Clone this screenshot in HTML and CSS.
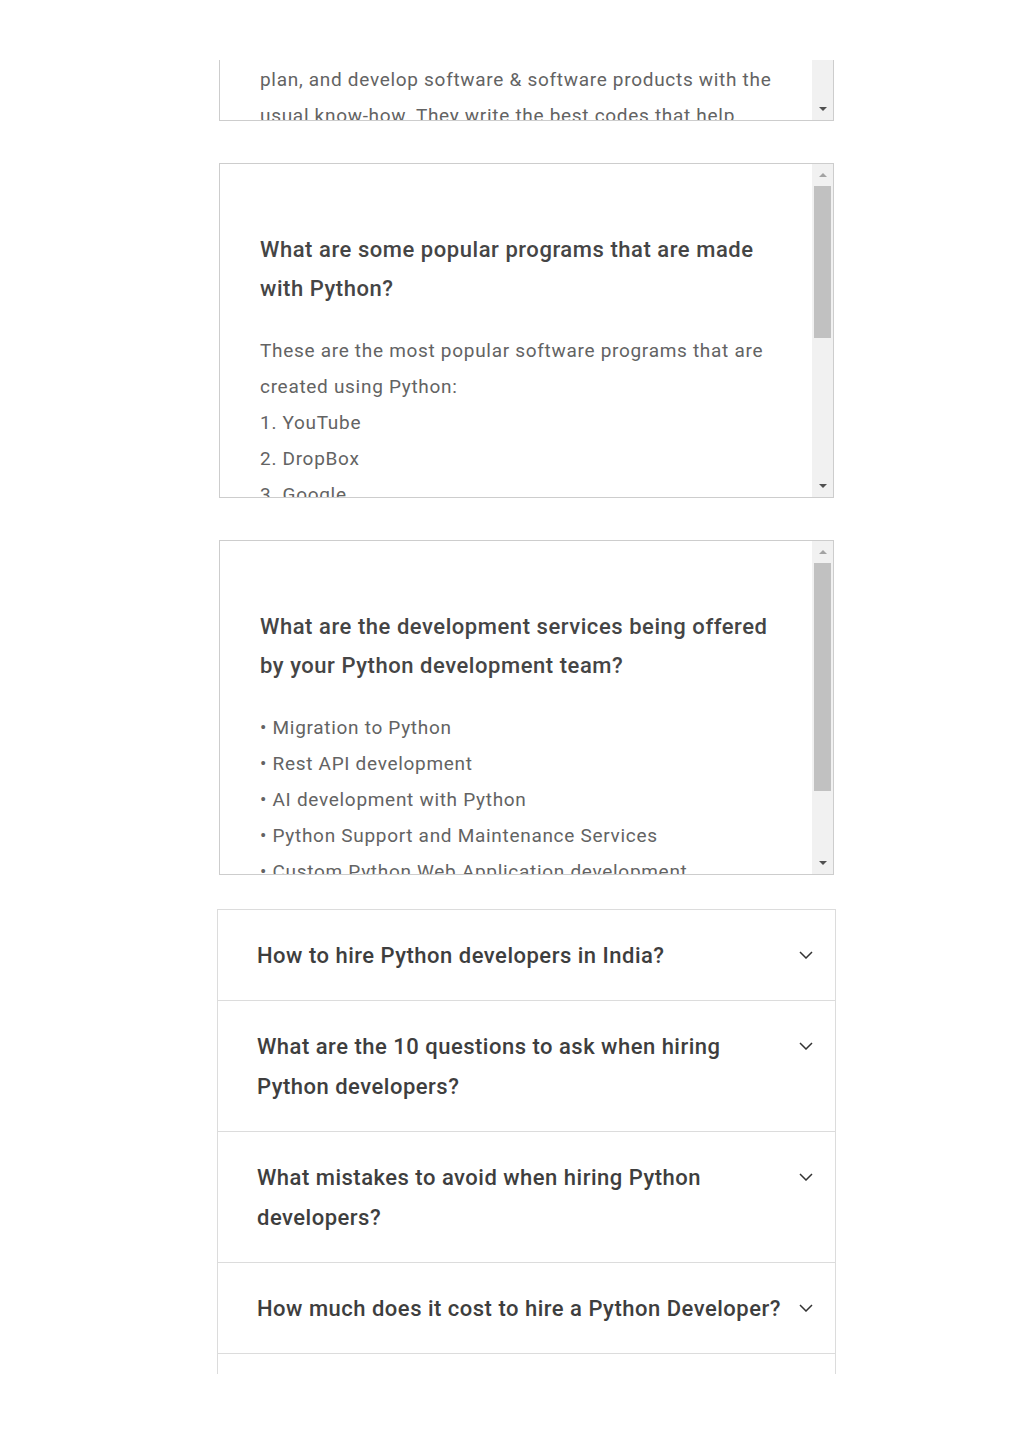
FILE: index.html
```html
<!DOCTYPE html>
<html lang="en">
<head>
<meta charset="utf-8">
<title>Python FAQ</title>
<link rel="stylesheet" href="styles.css">
</head>
<body>
<main class="page">
  <section class="box box-top">
    <div class="box-content">
      <p class="body-text">plan, and develop software &amp; software products with the usual know-how. They write the best codes that help</p>
    </div>
    <div class="sbar">
      <div class="sbar-fill"></div>
      <div class="sbar-btn"><span class="tri-down"></span></div>
    </div>
  </section>

  <section class="box box-mid">
    <div class="box-content">
      <h3 class="q-title">What are some popular programs that are made with Python?</h3>
      <p class="body-text">These are the most popular software programs that are created using Python:<br>1. YouTube<br>2. DropBox<br>3. Google<br>4. Instagram</p>
    </div>
    <div class="sbar">
      <div class="sbar-btn"><span class="tri-up"></span></div>
      <div class="sbar-thumb thumb-a"></div>
      <div class="sbar-fill"></div>
      <div class="sbar-btn"><span class="tri-down"></span></div>
    </div>
  </section>

  <section class="box box-mid">
    <div class="box-content">
      <h3 class="q-title">What are the development services being offered by your Python development team?</h3>
      <p class="body-text">• Migration to Python<br>• Rest API development<br>• AI development with Python<br>• Python Support and Maintenance Services<br>• Custom Python Web Application development</p>
    </div>
    <div class="sbar">
      <div class="sbar-btn"><span class="tri-up"></span></div>
      <div class="sbar-thumb thumb-b"></div>
      <div class="sbar-fill"></div>
      <div class="sbar-btn"><span class="tri-down"></span></div>
    </div>
  </section>

  <section class="accordion">
    <div class="acc-row">
      <span class="acc-q">How to hire Python developers in India?</span>
      <svg class="chev" viewBox="0 0 14 8" width="14" height="8"><path d="M1 1 L7 7 L13 1" fill="none" stroke="#333" stroke-width="1.5"/></svg>
    </div>
    <div class="acc-row">
      <span class="acc-q">What are the 10 questions to ask when hiring Python developers?</span>
      <svg class="chev" viewBox="0 0 14 8" width="14" height="8"><path d="M1 1 L7 7 L13 1" fill="none" stroke="#333" stroke-width="1.5"/></svg>
    </div>
    <div class="acc-row">
      <span class="acc-q">What mistakes to avoid when hiring Python developers?</span>
      <svg class="chev" viewBox="0 0 14 8" width="14" height="8"><path d="M1 1 L7 7 L13 1" fill="none" stroke="#333" stroke-width="1.5"/></svg>
    </div>
    <div class="acc-row">
      <span class="acc-q">How much does it cost to hire a Python Developer?</span>
      <svg class="chev" viewBox="0 0 14 8" width="14" height="8"><path d="M1 1 L7 7 L13 1" fill="none" stroke="#333" stroke-width="1.5"/></svg>
    </div>
    <div class="acc-row acc-row-clip"></div>
  </section>
</main>
</body>
</html>
```

FILE: styles.css
```css
* { box-sizing: border-box; }

html, body {
  margin: 0;
  padding: 0;
  background: #ffffff;
}

body {
  font-family: Roboto, "Liberation Sans", Arial, sans-serif;
  color: #444;
}

.page {
  width: 1024px;
  padding-top: 60px;
  display: flex;
  flex-direction: column;
  align-items: flex-start;
}

.box {
  display: flex;
  margin-left: 219px;
  width: 615px;
  border: 1px solid #cdcdcd;
  background: #fff;
  overflow: hidden;
}

.box-top {
  height: 61px;
  border-top: none;
}

.box-top .box-content {
  padding-top: 2px;
}

.box-mid {
  height: 335px;
  margin-top: 42px;
}

.box-content {
  flex: 1;
  overflow: hidden;
  padding: 0 26px 0 40px;
}

.box-mid .box-content {
  padding-top: 67px;
}

.q-title {
  margin: 0 0 25px;
  font-size: 22px;
  font-weight: 500;
  line-height: 38.5px;
  color: #454545;
  letter-spacing: 0.55px;
}

.body-text {
  margin: 0;
  font-size: 19px;
  font-weight: 400;
  line-height: 36px;
  color: #636363;
  letter-spacing: 0.7px;
}

.sbar {
  width: 21px;
  flex: none;
  background: #f1f1f1;
  display: flex;
  flex-direction: column;
}

.sbar-btn {
  height: 22px;
  flex: none;
  display: flex;
  align-items: center;
  justify-content: center;
}

.sbar-fill { flex: 1; }

.sbar-thumb {
  flex: none;
  margin: 0 2px;
  background: #c1c1c1;
}

.thumb-a { height: 152px; }
.thumb-b { height: 228px; }

.tri-up {
  width: 0;
  height: 0;
  border-left: 4px solid transparent;
  border-right: 4px solid transparent;
  border-bottom: 4px solid #a3a3a3;
}

.tri-down {
  width: 0;
  height: 0;
  border-left: 4px solid transparent;
  border-right: 4px solid transparent;
  border-top: 4px solid #505050;
}

.accordion {
  margin-top: 34px;
  margin-left: 217px;
  width: 619px;
  height: 465px;
  overflow: hidden;
  border: 1px solid #dcdcdc;
  border-bottom: none;
  display: flex;
  flex-direction: column;
}

.acc-row {
  flex: none;
  display: flex;
  align-items: flex-start;
  justify-content: space-between;
  padding: 26px 22px 25px 39px;
  border-bottom: 1px solid #dcdcdc;
}

.acc-row-clip {
  height: 80px;
  border-bottom: none;
}

.acc-q {
  width: 530px;
  font-size: 22px;
  font-weight: 500;
  line-height: 39.4px;
  color: #3e3e3e;
  letter-spacing: 0.5px;
}

.chev {
  flex: none;
  margin-top: 15px;
  margin-right: 0;
}
```
